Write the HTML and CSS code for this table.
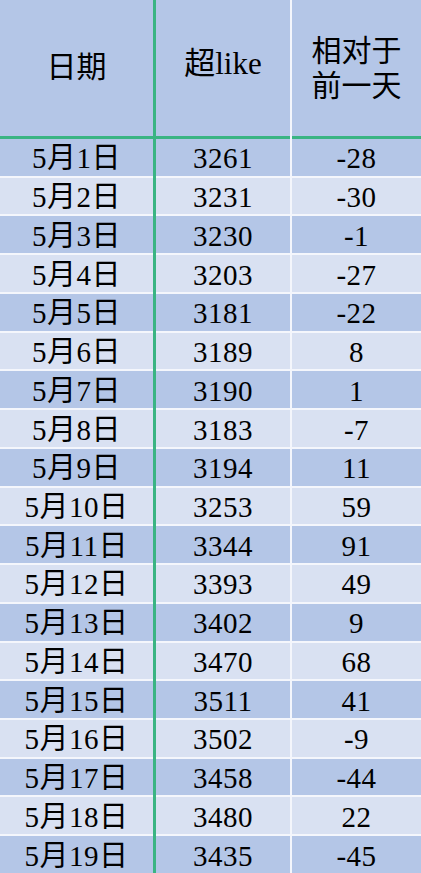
FILE: index.html
```html
<!DOCTYPE html>
<html lang="zh">
<head>
<meta charset="utf-8">
<title>超like</title>
<link rel="stylesheet" href="styles.css">
</head>
<body>
<div class="table">
  <div class="col col-date">
    <div class="head"><span>日期</span></div>
    <div class="cell dark">5月1日</div>
    <div class="cell light">5月2日</div>
    <div class="cell dark">5月3日</div>
    <div class="cell light">5月4日</div>
    <div class="cell dark">5月5日</div>
    <div class="cell light">5月6日</div>
    <div class="cell dark">5月7日</div>
    <div class="cell light">5月8日</div>
    <div class="cell dark">5月9日</div>
    <div class="cell light">5月10日</div>
    <div class="cell dark">5月11日</div>
    <div class="cell light">5月12日</div>
    <div class="cell dark">5月13日</div>
    <div class="cell light">5月14日</div>
    <div class="cell dark">5月15日</div>
    <div class="cell light">5月16日</div>
    <div class="cell dark">5月17日</div>
    <div class="cell light">5月18日</div>
    <div class="cell dark">5月19日</div>
  </div>
  <div class="col col-like">
    <div class="head"><span>超like</span></div>
    <div class="cell dark">3261</div>
    <div class="cell light">3231</div>
    <div class="cell dark">3230</div>
    <div class="cell light">3203</div>
    <div class="cell dark">3181</div>
    <div class="cell light">3189</div>
    <div class="cell dark">3190</div>
    <div class="cell light">3183</div>
    <div class="cell dark">3194</div>
    <div class="cell light">3253</div>
    <div class="cell dark">3344</div>
    <div class="cell light">3393</div>
    <div class="cell dark">3402</div>
    <div class="cell light">3470</div>
    <div class="cell dark">3511</div>
    <div class="cell light">3502</div>
    <div class="cell dark">3458</div>
    <div class="cell light">3480</div>
    <div class="cell dark">3435</div>
  </div>
  <div class="col col-diff">
    <div class="head head-two"><span class="line">相对于</span><span class="line">前一天</span></div>
    <div class="cell dark">-28</div>
    <div class="cell light">-30</div>
    <div class="cell dark">-1</div>
    <div class="cell light">-27</div>
    <div class="cell dark">-22</div>
    <div class="cell light">8</div>
    <div class="cell dark">1</div>
    <div class="cell light">-7</div>
    <div class="cell dark">11</div>
    <div class="cell light">59</div>
    <div class="cell dark">91</div>
    <div class="cell light">49</div>
    <div class="cell dark">9</div>
    <div class="cell light">68</div>
    <div class="cell dark">41</div>
    <div class="cell light">-9</div>
    <div class="cell dark">-44</div>
    <div class="cell light">22</div>
    <div class="cell dark">-45</div>
  </div>
</div>
</body>
</html>
```

FILE: styles.css
```css
html, body {
  margin: 0;
  padding: 0;
  background: #ffffff;
}

.table {
  display: flex;
  width: 421px;
  height: 873px;
  overflow: hidden;
  font-family: "Liberation Serif", "Noto Sans CJK SC", serif;
  color: #000;
}

.col {
  display: flex;
  flex-direction: column;
  height: 873px;
}

.col-date {
  width: 153px;
  border-right: 3px solid #3ab483;
}

.col-like {
  width: 134px;
  border-right: 2px solid #f4f6fc;
}

.col-diff {
  flex: 1;
}

.head {
  flex: none;
  height: 139px;
  box-sizing: border-box;
  border-bottom: 3px solid #3ab483;
  background: #b4c6e7;
  display: flex;
  flex-direction: column;
  align-items: center;
  justify-content: center;
  padding-bottom: 8px;
  font-size: 31px;
  line-height: 36px;
  text-align: center;
}

.head-two {
  gap: 0;
  padding-bottom: 4px;
}

.col-date .head span,
.head-two .line {
  font-family: "Noto Sans CJK SC", sans-serif;
  font-size: 30px;
}

.head-two .line {
  display: block;
  line-height: 35px;
}

.cell {
  flex: 1;
  display: flex;
  align-items: center;
  justify-content: center;
  font-size: 29px;
  letter-spacing: 0.5px;
  line-height: 1;
  padding-top: 3px;
  box-sizing: border-box;
}

.cell + .cell {
  border-top: 2px solid #f4f6fc;
}

.dark {
  background: #b4c6e7;
}

.light {
  background: #d9e1f2;
}
```
